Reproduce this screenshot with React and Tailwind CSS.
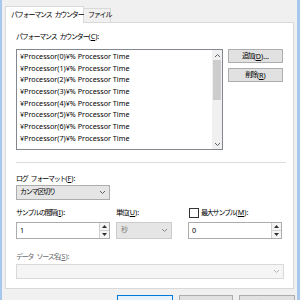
import React from 'react'

// Japanese text: tighter than Noto's full-width glyphs, close to Meiryo UI
const J = ({ children }) => {
  const parts = String(children).split(' ')
  return (
    <span className="text-[7px] tracking-[-1.2px]">
      {parts.map((p, i) => (
        <React.Fragment key={i}>
          {i > 0 && <span className="inline-block w-[3px]" />}
          {p}
        </React.Fragment>
      ))}
    </span>
  )
}

const Chevron = ({ up = false, color = '#606060' }) => (
  <svg width="7" height="5" viewBox="0 0 7 5">
    <path d={up ? 'M1 4 L3.5 1.5 L6 4' : 'M1 1 L3.5 3.5 L6 1'} fill="none" stroke={color} strokeWidth="1" />
  </svg>
)

const Spinner = () => (
  <div className="flex flex-col w-[10px] h-full border-l border-[#d0d0d0] bg-[#f4f4f4]">
    <div className="flex-1 flex items-center justify-center border-b border-[#d0d0d0]">
      <svg width="5" height="3" viewBox="0 0 5 3"><path d="M0 3 L2.5 0 L5 3 Z" fill="#303030" /></svg>
    </div>
    <div className="flex-1 flex items-center justify-center">
      <svg width="5" height="3" viewBox="0 0 5 3"><path d="M0 0 L2.5 3 L5 0 Z" fill="#303030" /></svg>
    </div>
  </div>
)

const App = () => {
  const items = [0, 1, 2, 3, 4, 5, 6, 7].map((n) => `¥Processor(${n})¥% Processor Time`)

  return (
    <div className="w-[300px] h-[300px] overflow-hidden bg-[#f0f0f0] flex font-['Noto_Sans','Noto_Sans_CJK_JP',sans-serif] text-[7.2px] text-black">
      <div className="w-[2px] h-full bg-[#a6c8ec] shrink-0" />
      <div className="flex-1 flex flex-col pl-[3px] pr-[2px]">
        {/* tabs */}
        <div className="shrink-0 flex items-end h-[23px] relative z-10">
          <div className="h-[17px] w-[79px] bg-white border border-b-0 border-[#d9d9d9] flex items-center pl-[5px] whitespace-nowrap"><J>パフォーマンス カウンター</J></div>
          <div className="h-[14px] w-[27px] mb-[1px] bg-[#f0f0f0] border border-l-0 border-b-0 border-[#d9d9d9] flex items-center pl-[4px] whitespace-nowrap"><J>ファイル</J></div>
        </div>
        {/* panel */}
        <div className="shrink-0 -mt-[1px] h-[267px] w-[289px] bg-white border border-[#d9d9d9] flex flex-col pl-[10px] pr-[7px]">
          <div className="shrink-0 mt-[8px] h-[10px] leading-[10px]"><J>パフォーマンス カウンター</J>(<span className="underline">C</span>):</div>
          <div className="shrink-0 mt-[8px] flex gap-[5px]">
            <div className="w-[207px] h-[101px] border border-[#828790] flex bg-white">
              <div className="flex-1 flex flex-col pt-[1px] pl-[3px]">
                {items.map((t, i) => (
                  <div key={i} className="h-[11.7px] leading-[11.7px] whitespace-nowrap">{t}</div>
                ))}
              </div>
              <div className="w-[10px] h-full bg-[#f0f0f0] flex flex-col">
                <div className="h-[10px] flex items-center justify-center"><Chevron up /></div>
                <div className="h-[40px] mx-[1px] bg-[#cdcdcd]" />
                <div className="flex-1" />
                <div className="h-[10px] flex items-center justify-center"><Chevron /></div>
              </div>
            </div>
            <div className="flex flex-col gap-[5px]">
              <div className="w-[55px] h-[14px] bg-[#e1e1e1] border border-[#adadad] flex items-center justify-center"><J>追加</J>(<span className="underline">D</span>)...</div>
              <div className="w-[55px] h-[14px] bg-[#e1e1e1] border border-[#adadad] flex items-center justify-center"><J>削除</J>(<span className="underline">R</span>)</div>
            </div>
          </div>
          <div className="shrink-0 mt-[12px] h-[1px] w-[270px] bg-[#dcdcdc]" />
          <div className="shrink-0 mt-[10px] h-[10px] leading-[10px]"><J>ログ フォーマット</J>(<span className="underline">F</span>):</div>
          <div className="shrink-0 mt-[2px] w-[94px] h-[15px] bg-[#e5e5e5] border border-[#acacac] flex items-center justify-between pl-[3px] pr-[3px]">
            <J>カンマ区切り</J>
            <Chevron />
          </div>
          <div className="shrink-0 mt-[8px] h-[10px] flex items-center">
            <div className="w-[100px]"><J>サンプルの間隔</J>(<span className="underline">I</span>):</div>
            <div className="w-[73px]"><J>単位</J>(<span className="underline">U</span>):</div>
            <div className="flex items-center gap-[2px]">
              <div className="w-[10px] h-[10px] border border-[#333] bg-white" />
              <span><J>最大サンプル</J>(<span className="underline">M</span>):</span>
            </div>
          </div>
          <div className="shrink-0 mt-[4px] h-[17px] flex">
            <div className="w-[94px] h-full border border-[#acacac] bg-white flex">
              <div className="flex-1 pl-[3px] flex items-center">1</div>
              <Spinner />
            </div>
            <div className="ml-[6px] w-[56px] h-full bg-[#e5e5e5] border border-[#cccccc] flex items-center justify-between pl-[4px] pr-[3px] text-[#838383]">
              <J>秒</J>
              <Chevron color="#8a8a8a" />
            </div>
            <div className="ml-[16px] w-[94px] h-full border border-[#acacac] bg-white flex">
              <div className="flex-1 pl-[3px] flex items-center">0</div>
              <Spinner />
            </div>
          </div>
          <div className="shrink-0 mt-[12px] h-[10px] leading-[10px] text-[#6d6d6d]"><J>データ ソース名</J>(<span className="underline">S</span>):</div>
          <div className="shrink-0 mt-[3px] w-[268px] h-[15px] bg-[#f5f5f5] border border-[#d9d9d9] flex items-center justify-end pr-[3px]">
            <Chevron color="#b5b5b5" />
          </div>
        </div>
        {/* dialog buttons */}
        <div className="shrink-0 mt-[6px] flex pl-[112px] gap-[6px]">
          <div className="w-[56px] h-[20px] bg-[#e5f1fb] border border-[#0078d7] flex items-start justify-center pt-[3px]">OK</div>
          <div className="w-[54px] h-[20px] bg-[#e1e1e1] border border-[#adadad] flex items-start justify-center pt-[3px]"><J>キャンセル</J></div>
          <div className="w-[56px] h-[20px] bg-[#e1e1e1] border border-[#adadad] flex items-start justify-center pt-[3px]"><J>適用</J>(A)</div>
        </div>
      </div>
      <div className="w-[3px] h-full bg-[#a6c8ec] shrink-0" />
    </div>
  )
}

export default App
